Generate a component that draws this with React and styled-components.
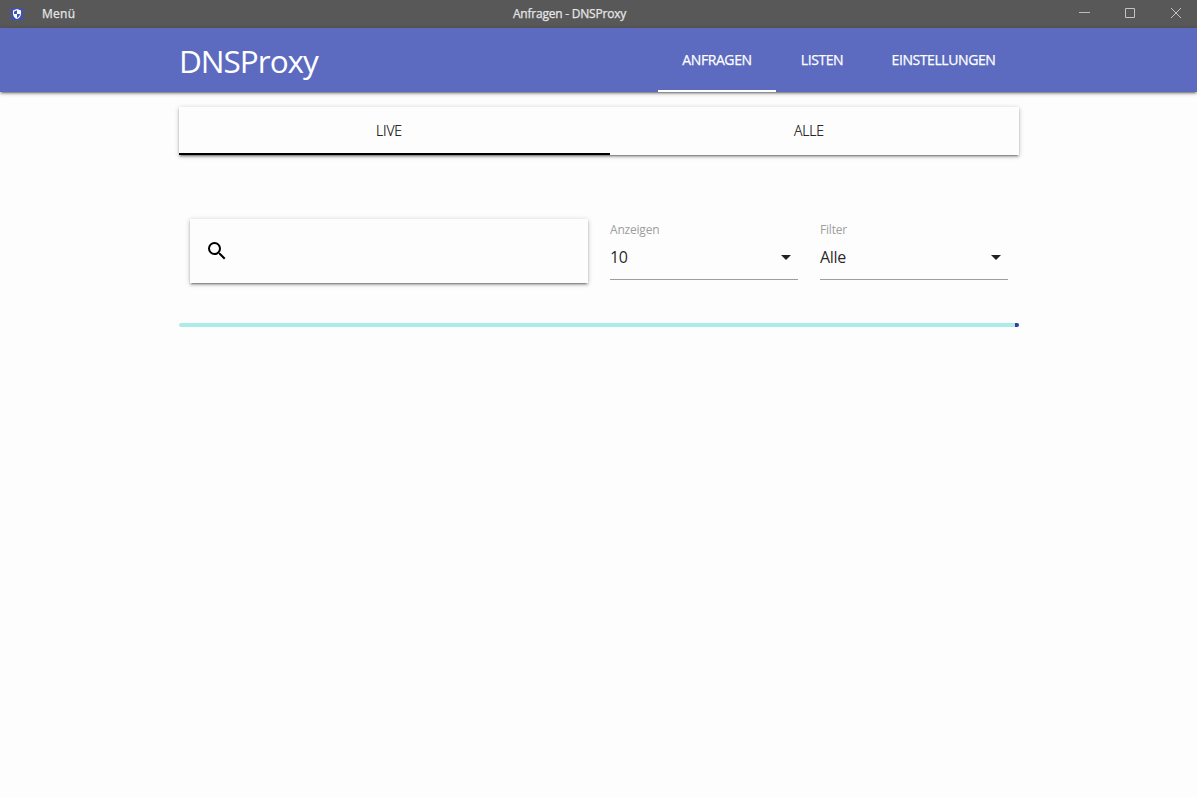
import React from "react";
import styled, { createGlobalStyle } from "styled-components";

const GlobalStyle = createGlobalStyle`
  *, *::before, *::after { box-sizing: border-box; }
  html, body { margin: 0; height: 100%; background: #fdfdfd; overflow: hidden; }
  body { font-family: "Open Sans", "Noto Sans", sans-serif; color: rgba(0, 0, 0, 0.87); }
`;

const elevation = "0 2px 2px 0 rgba(0,0,0,.2), 0 3px 1px -2px rgba(0,0,0,.2), 0 1px 5px 0 rgba(0,0,0,.22)";

const TitleBar = styled.header`
  display: grid;
  grid-template-columns: 1fr auto 1fr;
  align-items: center;
  height: 28px;
  background: #585858;
  color: #e6e6e6;
  font-size: 12px;
  line-height: 28px;
  -webkit-text-stroke: 0.25px currentColor;
`;

const MenuArea = styled.div`
  display: flex;
  align-items: center;
  gap: 19px;
  padding-left: 11px;
  letter-spacing: 0.25px;
`;

const WindowTitle = styled.div`
  margin-right: 58px;
  letter-spacing: -0.22px;
`;

const WindowControls = styled.div`
  display: flex;
  justify-content: flex-end;
  gap: 34px;
  padding-right: 15px;
`;

const Icon = styled.svg`
  display: block;
  flex: none;
  fill: currentColor;
`;

const NavBar = styled.nav`
  position: relative;
  height: 64px;
  background: #5c6bc0;
  color: #fff;
  box-shadow: ${elevation};
`;

const Container = styled.div`
  width: 840px;
  margin: 0 auto 0 179px;
`;

const NavContent = styled(Container)`
  display: flex;
  justify-content: space-between;
  height: 64px;
`;

const Brand = styled.div`
  font-size: 31.5px;
  line-height: 66px;
  letter-spacing: -1px;
`;

const NavTabs = styled.div`
  display: flex;
`;

const NavTab = styled.a`
  width: ${(p) => p.$width}px;
  height: 64px;
  text-align: center;
  font-size: 14px;
  line-height: 63px;
  letter-spacing: -0.42px;
  -webkit-text-stroke: 0.25px currentColor;
  border-bottom: 2px solid ${(p) => (p.$active ? "#fff" : "transparent")};
`;

const Tabs = styled.div`
  display: grid;
  grid-template-columns: 1fr 1fr;
  grid-template-rows: 46px 2px;
  margin-top: 15px;
  background: #fdfdfd;
  box-shadow: ${elevation};
`;

const Tab = styled.a`
  text-align: center;
  color: #000;
  font-size: 14px;
  font-weight: 300;
  line-height: 48px;
  letter-spacing: -0.15px;
  -webkit-text-stroke: 0.15px currentColor;
`;

const TabIndicator = styled.div`
  grid-column: 1 / -1;
  width: 431px;
  background: #000;
`;

const Controls = styled.div`
  display: grid;
  grid-template-columns: 398px 188px 188px;
  column-gap: 22px;
  padding-left: 11px;
  margin-top: 64px;
`;

const SearchCard = styled.label`
  display: flex;
  align-items: center;
  height: 64px;
  padding-left: 15px;
  background: #fdfdfd;
  color: #000;
  box-shadow: ${elevation};
`;

const Field = styled.div`
  height: 61px;
  padding-top: 3px;
  border-bottom: 1px solid #9e9e9e;
`;

const FieldLabel = styled.div`
  color: #9e9e9e;
  font-size: 12px;
  line-height: 16px;
  letter-spacing: -0.2px;
`;

const FieldValue = styled.div`
  display: flex;
  align-items: center;
  justify-content: space-between;
  height: 38px;
  font-size: 16px;
  letter-spacing: -0.3px;
`;

const Progress = styled.div`
  height: 4px;
  margin-top: 40px;
  border-radius: 2px;
  background: #acece6;
  overflow: hidden;
`;

const ProgressFill = styled.div`
  width: 4px;
  height: 4px;
  margin-left: auto;
  background: #303f9f;
`;

const Shield = () => (
  <Icon width="12" height="12" viewBox="0 0 12 12">
    <path fill="#3f51b5" d="M0 0h12v12H0z" />
    <path fill="#fff" d="M6 1 L10 2.6 V5.5 C10 8 8.4 10.2 6 11 C3.6 10.2 2 8 2 5.5 V2.6Z" />
    <path fill="#3f51b5" d="M6 2.2V6H9C8.8 7.7 7.6 9.2 6 9.9V6H3V3.4Z" />
  </Icon>
);

const SelectField = ({ label, value }) => (
  <Field>
    <FieldLabel>{label}</FieldLabel>
    <FieldValue>
      {value}
      <Icon width="24" height="24" viewBox="0 0 24 24">
        <path d="M7 10l5 5 5-5z" />
      </Icon>
    </FieldValue>
  </Field>
);

export default function App() {
  return (
    <>
      <GlobalStyle />
      <TitleBar>
        <MenuArea>
          <Shield />
          <span>Menü</span>
        </MenuArea>
        <WindowTitle>Anfragen - DNSProxy</WindowTitle>
        <WindowControls>
          <Icon width="12" height="12" viewBox="0 0 12 12">
            <path fill="#bdbdbd" d="M1 4h11v1H1z" />
          </Icon>
          <Icon width="12" height="12" viewBox="0 0 12 12">
            <path fill="none" stroke="#c4c4c4" d="M1.5 0.5h9v9h-9z" />
          </Icon>
          <Icon width="12" height="12" viewBox="0 0 12 12">
            <path fill="none" stroke="#c4c4c4" d="M1 0l10 10M11 0L1 10" />
          </Icon>
        </WindowControls>
      </TitleBar>
      <NavBar>
        <NavContent>
          <Brand>DNSProxy</Brand>
          <NavTabs>
            <NavTab $active $width={118}>ANFRAGEN</NavTab>
            <NavTab $width={92}>LISTEN</NavTab>
            <NavTab $width={151}>EINSTELLUNGEN</NavTab>
          </NavTabs>
        </NavContent>
      </NavBar>
      <Container>
        <Tabs>
          <Tab>LIVE</Tab>
          <Tab>ALLE</Tab>
          <TabIndicator />
        </Tabs>
        <Controls>
          <SearchCard>
            <Icon width="24" height="24" viewBox="0 0 24 24">
              <path d="M15.5 14h-.79l-.28-.27A6.471 6.471 0 0 0 16 9.5 6.5 6.5 0 1 0 9.5 16c1.61 0 3.09-.59 4.23-1.57l.27.28v.79l5 4.99L20.49 19l-4.99-5zm-6 0C7.01 14 5 11.99 5 9.5S7.01 5 9.5 5 14 7.01 14 9.5 11.99 14 9.5 14z" />
            </Icon>
          </SearchCard>
          <SelectField label="Anzeigen" value="10" />
          <SelectField label="Filter" value="Alle" />
        </Controls>
        <Progress>
          <ProgressFill />
        </Progress>
      </Container>
    </>
  );
}
